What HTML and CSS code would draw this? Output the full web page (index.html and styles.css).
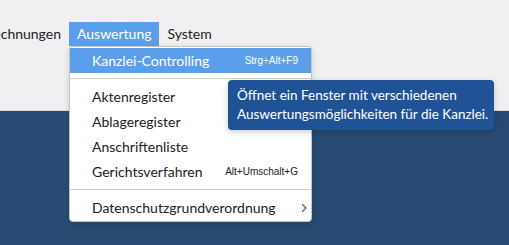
FILE: index.html
```html
<!DOCTYPE html>
<html lang="de">
<head>
    <meta charset="UTF-8">
    <meta name="viewport" content="width=device-width, initial-scale=1.0">
    <title>Auswertung</title>
    <link rel="stylesheet" href="styles.css">
</head>
<body>
    <div class="top">
        <nav class="menubar">
            <div class="menu cut"><span>Rechnungen</span></div>
            <div class="menu open">
                Auswertung
                <div class="dropdown">
                    <div class="item active">
                        <span>Kanzlei-Controlling</span>
                        <span class="key">Strg+Alt+F9</span>
                    </div>
                    <div class="sep"></div>
                    <div class="item"><span>Aktenregister</span></div>
                    <div class="item"><span>Ablageregister</span></div>
                    <div class="item"><span>Anschriftenliste</span></div>
                    <div class="item">
                        <span>Gerichtsverfahren</span>
                        <span class="key">Alt+Umschalt+G</span>
                    </div>
                    <div class="sep"></div>
                    <div class="item">
                        <span>Datenschutzgrundverordnung</span>
                        <svg class="chev" width="6" height="10" viewBox="0 0 6 10"><path d="M1 1 L5 5 L1 9" fill="none" stroke="#555" stroke-width="1.1"/></svg>
                    </div>
                </div>
                <div class="tooltip">Öffnet ein Fenster mit verschiedenen<br>Auswertungsmöglichkeiten für die Kanzlei.</div>
            </div>
            <div class="menu">System</div>
        </nav>
    </div>
    <div class="main"></div>
</body>
</html>
```

FILE: styles.css
```css
html, body {
    height: 100%;
}
body {
    margin: 0;
    font-family: Lato, 'Open Sans', sans-serif;
    color: #222;
    display: flex;
    flex-direction: column;
    overflow: hidden;
}
.top {
    height: 111px;
    background: #f0f0f3;
    padding-top: 22px;
    box-sizing: border-box;
    border-bottom: 1px solid #d8d8dc;
}
.main {
    flex: 1;
    background: #284a72;
}
.menubar {
    display: flex;
    font-size: 14px;
}
.menu {
    position: relative;
    height: 24px;
    line-height: 24px;
    padding: 0 8px;
    white-space: nowrap;
}
.menu.cut {
    display: flex;
    justify-content: flex-end;
    width: 53px;
}
.menu.open {
    background: #5b9fea;
    color: #fff;
}
.dropdown {
    position: absolute;
    top: 24px;
    left: 0;
    width: 241px;
    padding: 1px 0 1px;
    background: #fff;
    color: #222;
    border: 1px solid #c6c6c8;
    border-radius: 4px;
    box-shadow: 0 2px 6px rgba(0, 0, 0, 0.15);
}
.item {
    display: flex;
    justify-content: space-between;
    align-items: center;
    height: 25px;
    padding: 0 13px 0 22px;
}
.item.active {
    background: #5b9fea;
    color: #fff;
}
.key {
    font-family: 'Liberation Sans', Arial, sans-serif;
    font-size: 10px;
}
.chev {
    margin-right: -9px;
}
.sep {
    height: 1px;
    background: #d0d0d2;
    margin: 5px 0;
}
.tooltip {
    position: absolute;
    top: 58px;
    left: 159px;
    width: 248px;
    padding: 6px 9px;
    background: #1f5396;
    color: #fff;
    font-size: 13.5px;
    line-height: 19px;
    border-radius: 4px;
    box-shadow: 0 2px 6px rgba(0, 0, 0, 0.2);
    z-index: 2;
}
```
